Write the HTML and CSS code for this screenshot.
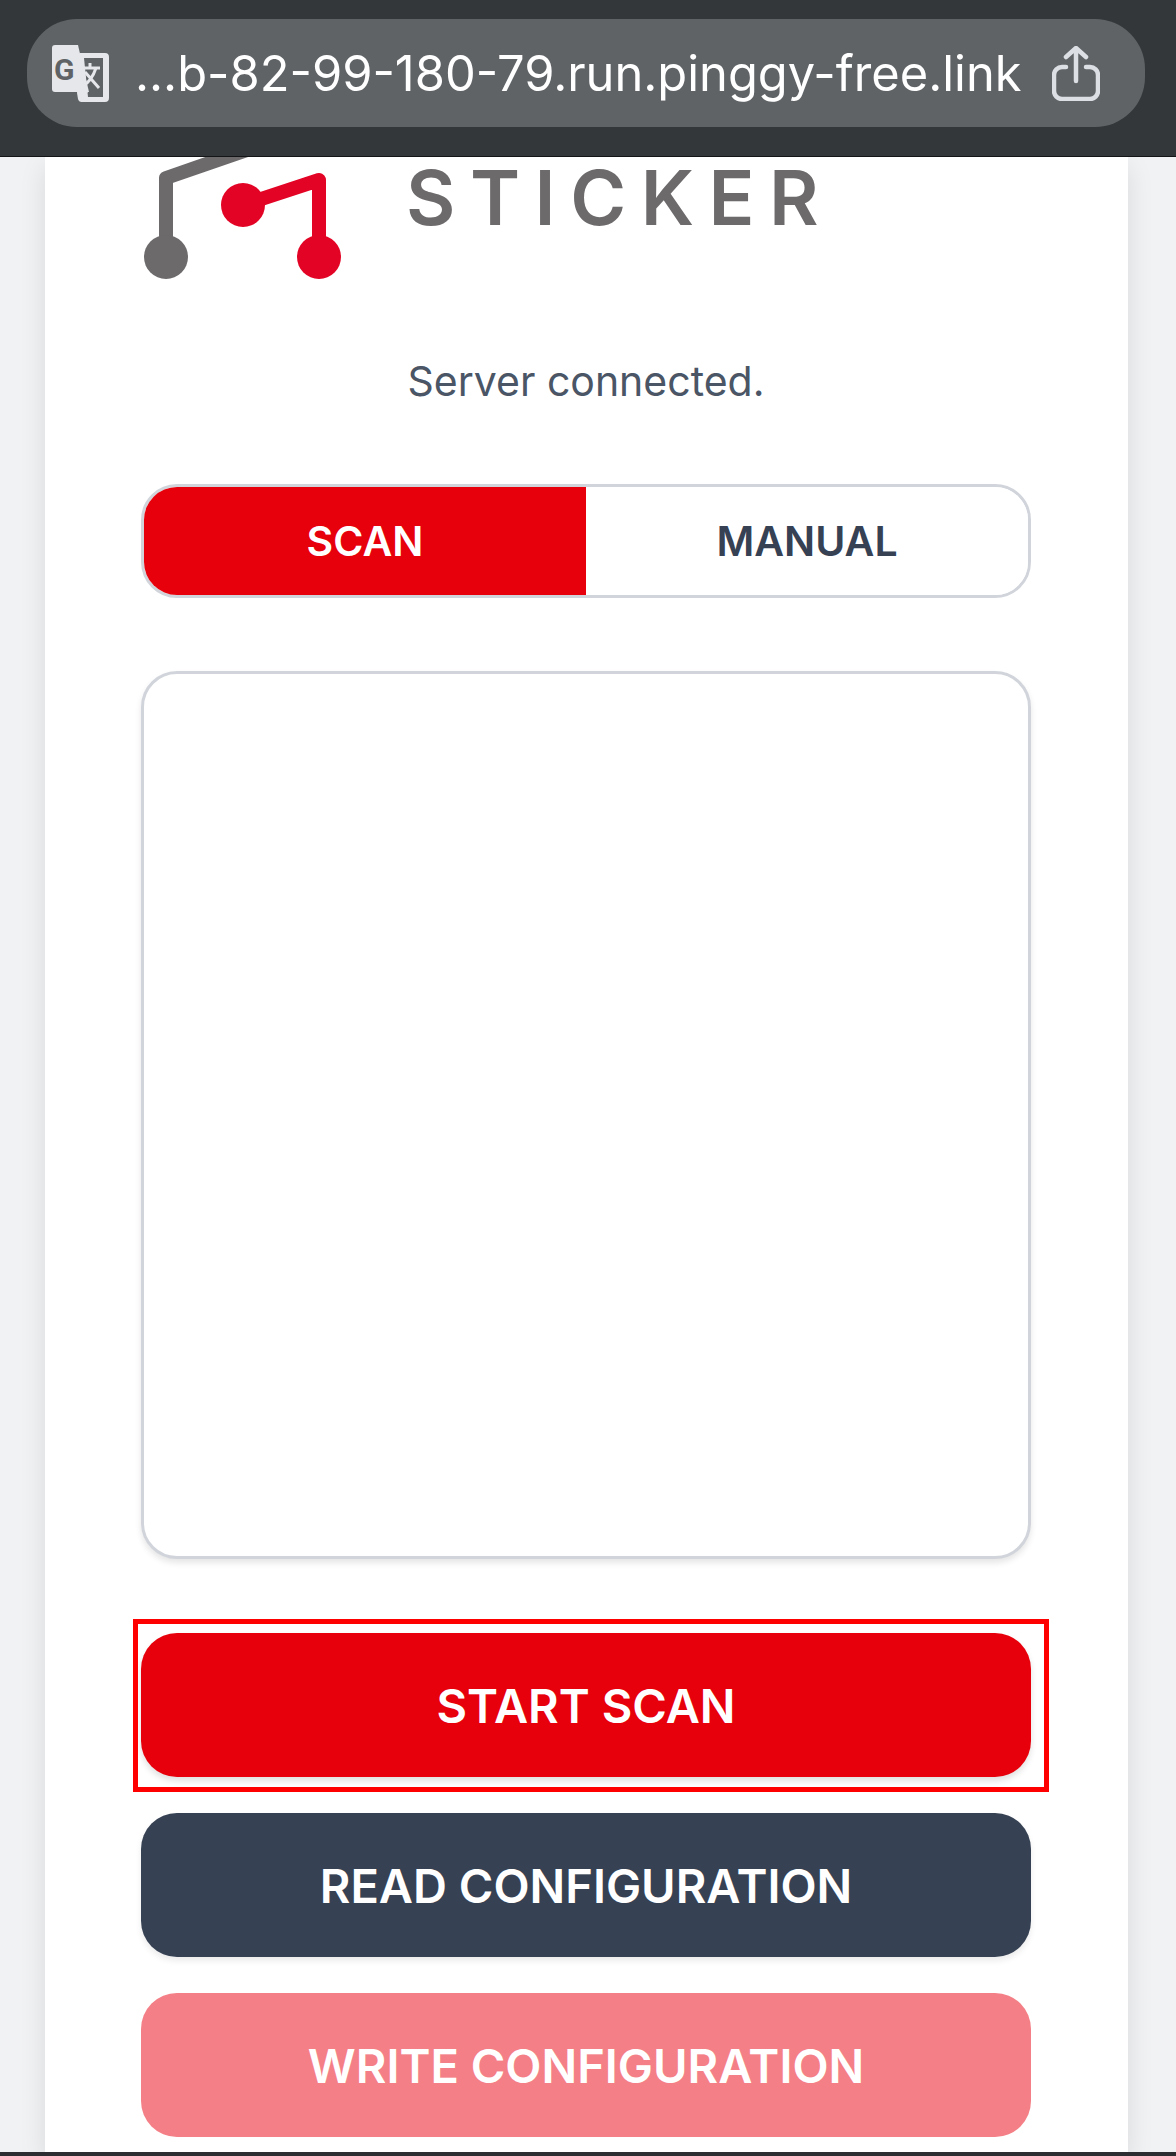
FILE: index.html
```html
<!DOCTYPE html>
<html lang="en">
<head>
  <meta charset="UTF-8">
  <title>Sticker Scanner</title>
  <link rel="stylesheet" href="styles.css">
</head>
<body>
  <header class="topbar">
    <div class="urlbar">
      <svg class="translate-icon" viewBox="0 0 57 57" aria-hidden="true">
        <path class="sheet-back" d="M28 8h25a4 4 0 0 1 4 4v41a4 4 0 0 1-4 4H30a4 4 0 0 1-4-3l-1-6z"/>
        <path class="sheet-window" d="M32 13h19v39H36z"/>
        <path class="sheet-front" d="M3 0h23l11 47H3a3 3 0 0 1-3-3V3a3 3 0 0 1 3-3z"/>
        <path class="sheet-front" d="M26 47h10l-8 9z"/>
        <text class="g-letter" x="2" y="35">G</text>
        <path class="wen" d="M29 23h19M38 18v5M44 23c-3 9-8 15-13 18M33 27l14 16"/>
      </svg>
      <span class="url">...b-82-99-180-79.run.pinggy-free.link</span>
      <svg class="share-icon" viewBox="0 0 48 55" aria-hidden="true">
        <path d="M14 21H10a8 8 0 0 0-8 8v16a8 8 0 0 0 8 8h28a8 8 0 0 0 8-8V29a8 8 0 0 0-8-8h-4"/>
        <path d="M24 35V3M14 11l10-9 10 9"/>
      </svg>
    </div>
  </header>

  <main class="page">
    <div class="card">
      <div class="brand">
        <svg class="logo" viewBox="141 157 220 135" aria-hidden="true">
          <path class="logo-grey" d="M166 257V178L270 142"/>
          <circle class="logo-grey-dot" cx="166" cy="257" r="22"/>
          <path class="logo-red" d="M243 205L319 180V257"/>
          <circle class="logo-red-dot" cx="243" cy="205" r="22"/>
          <circle class="logo-red-dot" cx="319" cy="257" r="22"/>
        </svg>
        <span class="brand-name">STICKER</span>
      </div>

      <p class="status">Server connected.</p>

      <div class="tabs">
        <button type="button" class="tab active">SCAN</button>
        <button type="button" class="tab">MANUAL</button>
      </div>

      <div class="scanner"></div>

      <div class="actions">
        <div class="highlighted">
          <button type="button" class="btn btn-red">START SCAN</button>
          <span class="highlight"></span>
        </div>
        <button type="button" class="btn btn-dark">READ CONFIGURATION</button>
        <button type="button" class="btn btn-faded">WRITE CONFIGURATION</button>
      </div>
    </div>
  </main>

  <div class="bottombar"></div>
</body>
</html>
```

FILE: styles.css
```css
html, body {
  height: 100%;
}
body {
  margin: 0;
  height: 2156px;
  overflow: hidden;
  display: flex;
  flex-direction: column;
  background: #f1f2f4;
  font-family: Inter, "Liberation Sans", sans-serif;
}

/* browser chrome */
.topbar {
  flex: none;
  height: 157px;
  padding: 19px 31px 0 27px;
  box-sizing: border-box;
  background: #34373a;
  border-bottom: 1px solid #141517;
  position: relative;
  z-index: 1;
}
.urlbar {
  height: 108px;
  border-radius: 50px;
  background: #5f6366;
  display: flex;
  align-items: center;
  padding: 0 45px 0 25px;
}
.translate-icon {
  width: 57px;
  height: 57px;
  flex: none;
}
.sheet-back { fill: #e5e7ea; }
.sheet-window { fill: #5f6366; }
.sheet-front { fill: #e5e7ea; }
.g-letter {
  font-family: Roboto, sans-serif;
  font-weight: 700;
  font-size: 30px;
  fill: #5f6366;
}
.wen {
  fill: none;
  stroke: #e5e7ea;
  stroke-width: 3;
}
.url {
  flex: 1;
  margin-left: 26px;
  font-size: 48.8px;
  color: #fff;
  white-space: nowrap;
}
.share-icon {
  width: 48px;
  height: 55px;
  flex: none;
  fill: none;
  stroke: #dcdfe4;
  stroke-width: 4.5;
  stroke-linecap: round;
  stroke-linejoin: round;
}

/* page */
.page {
  flex: 1;
  min-height: 0;
  padding: 0 48px 0 45px;
}
.card {
  height: 100%;
  background: #fff;
  padding: 0 97px 0 96px;
  box-shadow: 0 10px 25px rgba(0, 0, 0, 0.1);
}
.brand {
  display: flex;
  align-items: flex-start;
  height: 135px;
}
.logo {
  width: 220px;
  height: 135px;
  flex: none;
}
.logo-grey, .logo-red {
  fill: none;
  stroke-width: 14;
  stroke-linejoin: round;
}
.logo-grey { stroke: #6d6a6b; }
.logo-red { stroke: #e30425; }
.logo-grey-dot { fill: #6d6a6b; }
.logo-red-dot { fill: #e30425; }
.brand-name {
  margin-left: 45px;
  font-size: 76px;
  line-height: 80px;
  font-weight: 600;
  letter-spacing: 14.5px;
  white-space: nowrap;
  color: #6d6a6b;
}
.status {
  margin: 65px 0 0;
  text-align: center;
  font-size: 41px;
  line-height: 48px;
  color: #4a5565;
}
.tabs {
  display: flex;
  margin-top: 79px;
  height: 114px;
  box-sizing: border-box;
  border: 3px solid #d1d5db;
  border-radius: 36px;
  overflow: hidden;
}
.tab {
  flex: 1;
  padding: 0;
  border: none;
  background: #fff;
  font-family: inherit;
  font-size: 41px;
  font-weight: 600;
  color: #364153;
}
.tab.active {
  background: #e7000b;
  color: #fff;
}
.scanner {
  margin-top: 73px;
  height: 888px;
  box-sizing: border-box;
  border: 3px solid #d1d5db;
  border-radius: 36px;
  background: #fff;
  box-shadow: 0 4px 6px rgba(0, 0, 0, 0.1);
}
.actions {
  margin-top: 74px;
  display: flex;
  flex-direction: column;
  gap: 36px;
}
.highlighted {
  position: relative;
}
.highlight {
  position: absolute;
  top: -14px;
  right: -18px;
  bottom: -15px;
  left: -8px;
  border: 5px solid #ff0000;
}
.btn {
  display: block;
  width: 100%;
  height: 144px;
  padding: 0;
  border: none;
  border-radius: 36px;
  font-family: inherit;
  font-size: 47px;
  font-weight: 600;
  color: #fff;
}
.btn-red {
  background: #e7000b;
  box-shadow: 0 4px 6px rgba(0, 0, 0, 0.12);
}
.btn-dark {
  background: #364153;
  box-shadow: 0 4px 6px rgba(0, 0, 0, 0.08);
}
.btn-faded { background: #f47f86; }
.bottombar {
  flex: none;
  height: 4px;
  background: #2b2d30;
  position: relative;
}
```
